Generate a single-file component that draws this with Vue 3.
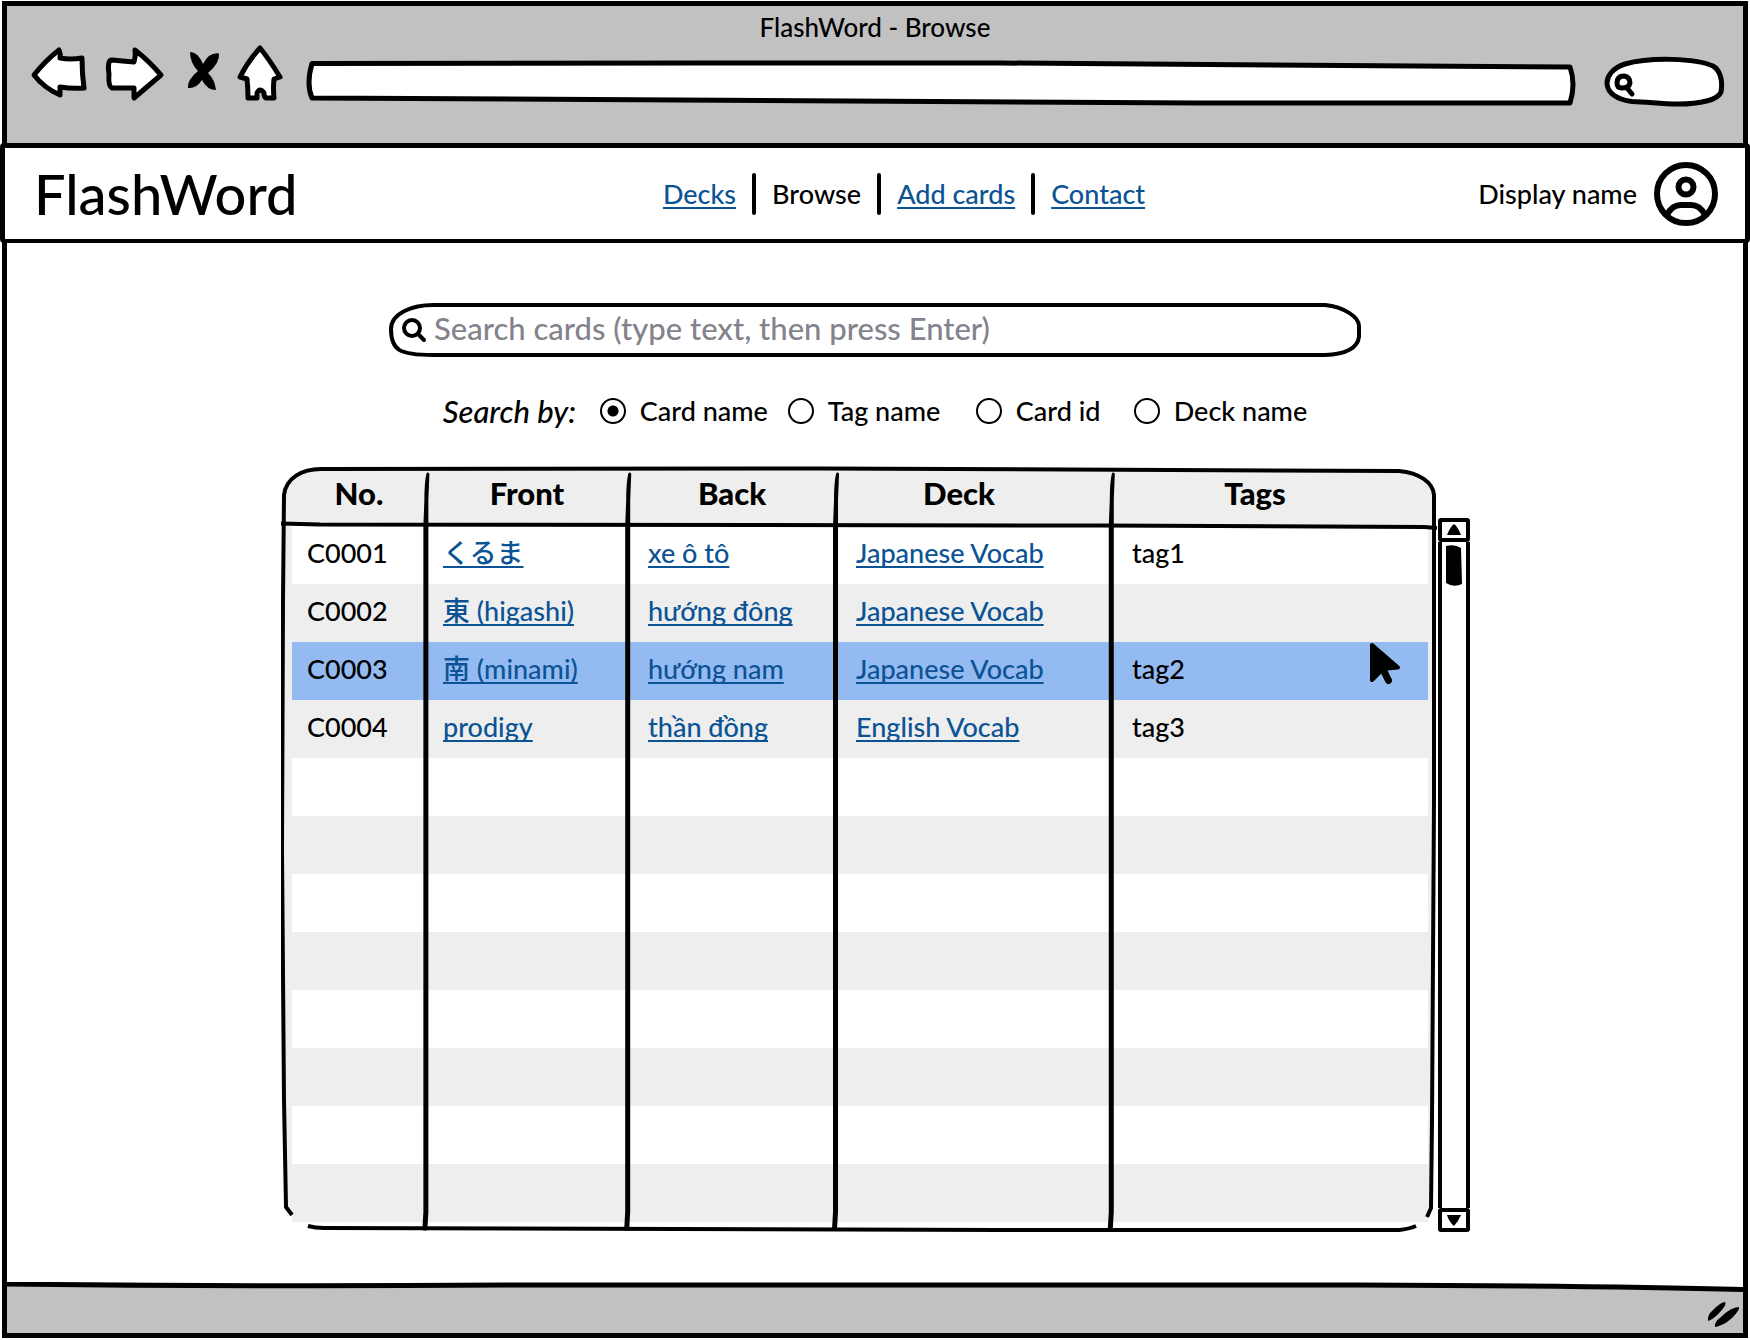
<script setup>
import { ref } from 'vue'

const searchBy = ref('Card name')
const options = ['Card name', 'Tag name', 'Card id', 'Deck name']

const cards = [
  { id: 'C0001', front: 'くるま', back: 'xe ô tô', deck: 'Japanese Vocab', tags: 'tag1' },
  { id: 'C0002', front: '東 (higashi)', back: 'hướng đông', deck: 'Japanese Vocab', tags: '' },
  { id: 'C0003', front: '南 (minami)', back: 'hướng nam', deck: 'Japanese Vocab', tags: 'tag2', selected: true },
  { id: 'C0004', front: 'prodigy', back: 'thần đồng', deck: 'English Vocab', tags: 'tag3' },
]
const blankRows = 8
const columnLines = [426, 628, 836, 1112]
</script>

<template>
  <div class="window">
    <div class="chrome">
      <div class="title">FlashWord - Browse</div>
      <div class="toolbar">
        <button class="tool" aria-label="Back">
          <svg width="60" height="60" viewBox="30 44 60 60"><path class="ink white" d="M34 75Q45 61 59 50Q61 54 60 58Q70 60 82 58Q82 74 84 88Q72 89 60 87V95Q44 88 34 75Z" /></svg>
        </button>
        <button class="tool forward" aria-label="Forward">
          <svg width="62" height="60" viewBox="104 44 62 60"><path class="ink white" d="M112 60Q122 61 134 62Q136 56 135 50Q149 61 161 75Q148 86 134 98V88H112Q108 86 109 74Q107 60 112 60Z" /></svg>
        </button>
        <button class="tool stop" aria-label="Stop">
          <svg width="34" height="60" viewBox="187 44 34 60"><path d="M190 52Q198 52 203 64Q209 52 219 53.500Q220 63 208 73Q215 80 216 90Q207 90 202 80Q196 89 188 88Q187 80 198 71Q190 63 190 52Z" /></svg>
        </button>
        <button class="tool home" aria-label="Home">
          <svg width="48" height="60" viewBox="236 44 48 60"><path class="ink white" d="M260 48Q269 59 280 77L274 79Q273 88 274 98H266Q264 97 264 93Q260 87 257 93L257 98H248Q248 88 247 79L240 77Q248 61 260 48Z" /></svg>
        </button>
        <label class="address">
          <svg class="shape" viewBox="306 58 1270 50" preserveAspectRatio="none"><path class="ink white" d="M312 63.500L700 63L1000 63L1570 67Q1576 84 1570 103L1200 103L312 98Q306 84 312 63.500Z" /></svg>
          <input class="bare" aria-label="Address" type="text" />
        </label>
        <label class="quick">
          <svg class="shape" viewBox="1604 56 122 52" preserveAspectRatio="none"><path class="ink white" d="M1632 101.500C1600 98 1600 72 1625 64C1650 57 1695 58 1713 66C1720 70 1723 80 1721 92C1718 100 1700 104 1678 104C1660 104 1650 102 1632 101.500Z" /><path class="ink" d="M1617 83Q1617 76 1624 76Q1630 77 1630 83Q1629 88 1622 88Q1617 88 1617 83ZM1627 88L1632 94" /></svg>
          <input class="bare" aria-label="Quick search" type="text" />
        </label>
      </div>
    </div>

    <header class="header">
      <div class="brand">FlashWord</div>
      <nav class="nav">
        <a href="#decks">Decks</a><i></i>
        <span>Browse</span><i></i>
        <a href="#add">Add cards</a><i></i>
        <a href="#contact">Contact</a>
      </nav>
      <div class="user">
        <span>Display name</span>
        <svg width="64" height="64" viewBox="1654 162 64 64"><g class="avatar"><circle cx="1686" cy="194" r="29" /><circle cx="1686" cy="187" r="7.500" /><path d="M1667 215Q1672 205 1681 205H1691Q1700 205 1705 215" /></g></svg>
      </div>
    </header>

    <main class="main">
      <label class="search">
        <svg class="shape" viewBox="390 302 972 54" preserveAspectRatio="none"><path class="line white" d="M434 304H1326C1345 306 1360 316 1360 325V336C1358 350 1340 353.500 1326 354H434C400 354 392 349 392 328C392 312 414 304 434 304Z" /></svg>
        <svg class="lens" width="26" height="26" viewBox="401 316 26 26"><circle cx="412" cy="327" r="8" /><path d="M418 333L424 339" /></svg>
        <input class="bare" type="text" placeholder="Search cards (type text, then press Enter)" />
      </label>

      <div class="filters" role="radiogroup" aria-labelledby="by">
        <em id="by">Search by:</em>
        <label v-for="o in options" :key="o"><input v-model="searchBy" type="radio" name="by" :value="o" />{{ o }}</label>
      </div>

      <div class="results">
        <div class="sheet">
          <svg class="shape" viewBox="281 466 1158 766" preserveAspectRatio="none"><path class="paper" d="M284 495Q292 470 321 469L1400 471Q1430 475 1434 495L1433 1208L1424 1222H298L286 1208L282 900Z" /></svg>
          <table class="grid">
            <colgroup><col class="c-no" /><col class="c-front" /><col class="c-back" /><col class="c-deck" /><col class="c-tags" /></colgroup>
            <thead>
              <tr><th>No.</th><th>Front</th><th>Back</th><th class="wide">Deck</th><th class="wide">Tags</th></tr>
            </thead>
            <tbody>
              <tr v-for="c in cards" :key="c.id" :class="{ selected: c.selected }">
                <td>{{ c.id }}</td>
                <td><a href="#card">{{ c.front }}</a></td>
                <td><a href="#card">{{ c.back }}</a></td>
                <td><a href="#deck">{{ c.deck }}</a></td>
                <td>{{ c.tags }}</td>
              </tr>
              <tr v-for="n in blankRows" :key="n"><td></td><td></td><td></td><td></td><td></td></tr>
            </tbody>
          </table>
          <svg class="shape over" viewBox="281 466 1158 766" preserveAspectRatio="none">
            <path class="line" d="M292 1215L286 1207L284 1100L282 850L283 600L284 495C286 478 302 469 321 469L820 468.500L1400 471C1420 473 1434 482 1435 495L1435 800L1433 1120L1432 1208L1428 1217" />
            <path class="line" d="M308 1226Q315 1228 324 1228L1000 1230H1400Q1410 1229 1417 1226" />
            <path class="line" d="M281 523.500L320 524.500L1100 525.500L1425 527L1438 528" />
            <path v-for="x in columnLines" :key="x" class="column" :d="`M${x + 2} 474Q${x} 482 ${x} 500L${x - 1} 526L${x - 1} 1212L${x - 2} 1229L${x} 1229L${x + 1} 1212L${x + 1} 500L${x + 2} 475Z`" />
          </svg>
          <svg class="cursor" width="34" height="44" viewBox="1370 641 34 44"><path d="M1373 645L1399 667.500L1388 668.500L1382 671L1373 680Z" /><path class="stick" d="M1384 669L1389.500 680.500" /></svg>
        </div>
        <div class="scrollbar">
          <button aria-label="Scroll up"><svg width="16" height="12" viewBox="0 0 16 12"><path d="M1 11Q4 3 8 0Q12 3 15 11Z" /></svg></button>
          <div class="track"><svg width="16" height="42" viewBox="0 0 16 42"><path d="M0 1Q9 -1 15 3L16 39Q8 43 0 38Z" /></svg></div>
          <button aria-label="Scroll down"><svg width="16" height="12" viewBox="0 0 16 12"><path d="M1 1H15Q12 8 8 12Q3 8 1 1Z" /></svg></button>
        </div>
      </div>
    </main>

    <footer class="status">
      <svg class="edge" viewBox="0 0 1736 10" preserveAspectRatio="none"><path d="M0 0V2H1400L1736 7V0Z" fill="#fff" /><path class="ink" d="M0 2Q250 5 500 3H1350Q1600 4 1736 7.500" /></svg>
      <svg width="34" height="28" viewBox="1706 1301 34 28"><path d="M1707 1321Q1706 1315 1712 1310Q1720 1302 1724 1302Q1726 1304 1720 1311Q1713 1319 1707 1321ZM1714 1327Q1713 1322 1720 1317Q1730 1307 1738 1307Q1739 1310 1731 1318Q1722 1326 1714 1327Z" /></svg>
    </footer>
  </div>
</template>

<style>
body {
  margin: 0;
  background: #fff;
}
</style>

<style scoped>
.window {
  box-sizing: border-box;
  min-height: calc(100vh - 3px);
  margin: 1px 2px 2px;
  border: 5px solid #000;
  display: flex;
  flex-direction: column;
  font-family: Lato, "Noto Sans CJK JP", sans-serif;
  font-size: 27px;
  font-weight: 500;
  line-height: 32px;
  color: #000;
}
svg {
  display: block;
}
a {
  color: #0b5394;
  text-decoration: underline;
  text-decoration-thickness: 2px;
  text-underline-offset: 3px;
  text-decoration-skip-ink: none;
}
button {
  padding: 0;
  border: 0;
  background: none;
  color: inherit;
}
.ink {
  fill: none;
  stroke: #000;
  stroke-width: 5;
  stroke-linejoin: round;
  stroke-linecap: round;
}
.line {
  fill: none;
  stroke: #000;
  stroke-width: 4;
  stroke-linejoin: round;
}
.white {
  fill: #fff;
}
.shape {
  position: absolute;
  inset: 0;
  width: 100%;
  height: 100%;
}
.bare {
  position: relative;
  width: 100%;
  border: 0;
  outline: 0;
  background: none;
  font: inherit;
}
.chrome {
  background: #c1c1c1;
  height: 137px;
}
.title {
  text-align: center;
  padding-top: 5px;
  font-size: 26px;
}
.toolbar {
  display: flex;
  align-items: flex-start;
  padding: 1px 17px 0 23px;
}
.forward {
  margin-left: 14px;
}
.stop {
  margin-left: 21px;
}
.home {
  margin-left: 15px;
}
.address {
  position: relative;
  display: flex;
  flex: 1;
  height: 50px;
  margin: 14px 28px 0 22px;
  padding: 0 16px;
}
.quick {
  position: relative;
  display: flex;
  width: 122px;
  height: 52px;
  margin-top: 12px;
  padding: 0 12px 0 34px;
  box-sizing: border-box;
}
.header {
  display: grid;
  grid-template-columns: 1fr auto 1fr;
  align-items: center;
  height: 91px;
  margin: 0 -7px;
  padding: 0 27px 0 29px;
  border: 5px solid #000;
  border-bottom-width: 4px;
  border-radius: 4px;
  background: #fff;
}
.brand {
  font-size: 56px;
  line-height: 64px;
}
.nav {
  display: flex;
  align-items: center;
  gap: 16px;
  padding-left: 56px;
}
.nav i {
  width: 4px;
  height: 42px;
  border-radius: 2px;
  background: #000;
}
.user {
  display: flex;
  align-items: center;
  justify-content: flex-end;
  gap: 17px;
}
.avatar {
  fill: none;
  stroke: #000;
  stroke-width: 6;
}
.main {
  flex: 1;
  display: flex;
  flex-direction: column;
  align-items: center;
  padding: 60px 24px 46px;
}
.search {
  position: relative;
  display: flex;
  align-items: center;
  box-sizing: border-box;
  width: 100%;
  max-width: 972px;
  height: 54px;
  padding: 0 30px 0 12px;
  gap: 7px;
  font-size: 31px;
}
.search input {
  height: 50px;
  padding: 0 0 4px;
}
.search input::placeholder {
  color: #84828c;
  opacity: 1;
}
.lens {
  position: relative;
  flex: none;
  fill: none;
  stroke: #000;
  stroke-width: 4;
  stroke-linecap: round;
}
.filters {
  display: grid;
  grid-template-columns: 157px 188px 188px 158px auto;
  align-items: center;
  margin: 38px 0 39px;
}
.filters em {
  font-size: 31px;
}
.filters label {
  display: flex;
  align-items: center;
  gap: 14px;
}
.filters input {
  appearance: none;
  box-sizing: border-box;
  width: 26px;
  height: 26px;
  margin: 0;
  border: 2px solid #000;
  border-radius: 50%;
}
.filters input:checked {
  background: radial-gradient(circle, #000 5px, transparent 6px);
}
.results {
  display: flex;
  width: 100%;
  max-width: 1189px;
  padding-left: 1px;
}
.sheet {
  position: relative;
  flex: 1;
  padding: 2px 10px 10px 11px;
}
.paper {
  fill: #eee;
}
.over {
  pointer-events: none;
}
.grid {
  position: relative;
  width: 100%;
  table-layout: fixed;
  border-collapse: collapse;
}
.c-no {
  width: 134px;
}
.c-front {
  width: 202px;
}
.c-back {
  width: 208px;
}
.c-deck {
  width: 276px;
}
.grid th {
  height: 58px;
  box-sizing: border-box;
  padding: 0 0 8px;
  font-size: 31px;
  font-weight: 900;
}
.grid th.wide {
  padding-right: 30px;
}
.grid td {
  height: 58px;
  box-sizing: border-box;
  padding: 0 0 4px 20px;
  white-space: nowrap;
}
.grid td:first-child {
  padding-left: 15px;
}
.grid td:nth-child(2) {
  padding-left: 17px;
}
.grid tbody tr:nth-child(odd) {
  background: #fff;
}
.grid tbody tr:nth-child(even) {
  background: #eee;
}
.grid tbody tr.selected {
  background: #94baf2;
}
.column {
  stroke: #000;
  stroke-width: 3;
  stroke-linejoin: round;
}
.cursor {
  position: absolute;
  right: 35px;
  top: 175px;
  stroke: #000;
  stroke-width: 4;
  stroke-linejoin: round;
  stroke-linecap: round;
}
.stick {
  stroke-width: 7;
}
.scrollbar {
  display: flex;
  flex-direction: column;
  width: 32px;
  margin-top: 52px;
  box-sizing: border-box;
}
.scrollbar button {
  display: grid;
  place-items: center;
  height: 24px;
  border: 4px solid #000;
  border-radius: 3px;
}
.track {
  flex: 1;
  border: solid #000;
  border-width: 0 4px;
  padding: 3px 4px 0;
}
.status {
  position: relative;
  display: flex;
  justify-content: flex-end;
  align-items: flex-end;
  height: 49px;
  padding: 0 2px 4px;
  box-sizing: border-box;
  background: #c1c1c1;
}
.edge {
  position: absolute;
  left: 0;
  top: -2px;
  width: 100%;
  height: 10px;
}
</style>
